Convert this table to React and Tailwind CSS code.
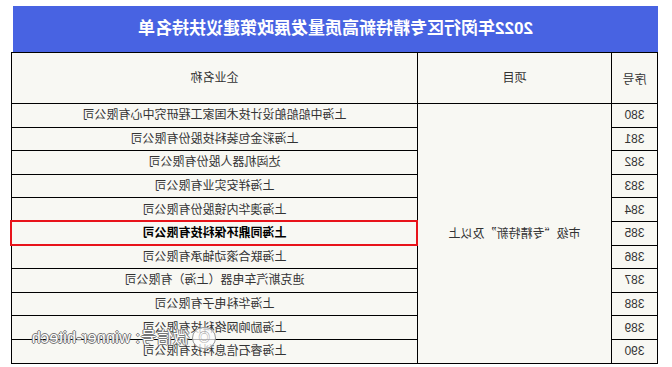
import React from 'react';

const rows = [
  { no: 380, name: '上海中船船舶设计技术国家工程研究中心有限公司' },
  { no: 381, name: '上海彩金包装科技股份有限公司' },
  { no: 382, name: '达闼机器人股份有限公司' },
  { no: 383, name: '上海祥安实业有限公司' },
  { no: 384, name: '上海澳华内镜股份有限公司' },
  { no: 385, name: '上海同鼎环保科技有限公司', marked: true },
  { no: 386, name: '上海联合滚动轴承有限公司' },
  { no: 387, name: '迪克斯汽车电器（上海）有限公司' },
  { no: 388, name: '上海华科电子有限公司' },
  { no: 389, name: '上海励响网络科技有限公司' },
  { no: 390, name: '上海睿石信息科技有限公司' },
];

const cjk = "font-['Liberation_Sans','Noto_Sans_CJK_SC',sans-serif]";

export default function App() {
  return (
    <div className={`relative h-[367px] w-[672px] overflow-hidden bg-white -scale-x-100 ${cjk}`}>
      <div className="ml-[14px] w-[646px] pt-[6px]">
        <div className="mr-[1px] flex h-[46px] items-center justify-center bg-[#4863e2] text-[17px] font-bold text-white">
          2022年闵行区专精特新高质量发展政策建议扶持名单
        </div>
        <table className="w-[646px] table-fixed border-collapse bg-[#f8f8f3] text-[12px] text-[#333]">
          <colgroup>
            <col className="w-[46px]" />
            <col className="w-[194px]" />
            <col className="w-[406px]" />
          </colgroup>
          <thead>
            <tr className="h-[51px]">
              <th className="border border-black pt-[4px] text-center font-normal">序号</th>
              <th className="border border-black text-center font-normal">项目</th>
              <th className="border border-black text-center font-normal">企业名称</th>
            </tr>
          </thead>
          <tbody>
            {rows.map((r, i) => (
              <tr key={r.no} className="h-[23.6px]">
                <td className="border border-black p-0 text-center leading-none">{r.no}</td>
                {i === 0 && (
                  <td rowSpan={rows.length} className="border border-black text-center">
                    市级<span className="font-['Noto_Sans_CJK_SC',sans-serif]">“专精特新”</span>及以上
                  </td>
                )}
                <td
                  className={
                    r.marked
                      ? 'border border-black p-0 text-center font-bold text-black outline-2 -outline-offset-1 outline-[#e8131a]'
                      : 'border border-black p-0 text-center leading-none'
                  }
                >
                  {r.name}
                </td>
              </tr>
            ))}
          </tbody>
        </table>
      </div>
      <div className="absolute left-[456px] top-[326px] flex items-center gap-[3px] text-[16px] tracking-[0.3px] text-white [text-shadow:1px_0_0_#777,-1px_0_0_#777,0_1px_0_#777,0_-1px_0_#777]">
        <span className="flex h-[22px] w-[24px] items-center justify-center rounded-full border border-[#999] bg-white/70 text-[12px] text-[#999] [text-shadow:none]">
          ◎
        </span>
        <span>微信号: winner-hitech</span>
      </div>
    </div>
  );
}
